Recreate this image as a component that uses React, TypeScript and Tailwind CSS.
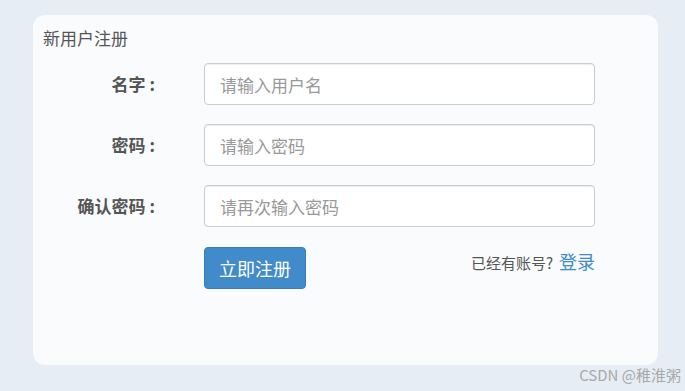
const font = { fontFamily: '"Noto Sans CJK SC", "Noto Sans", sans-serif' };

const fields = [
  { label: '名字', placeholder: '请输入用户名', type: 'text' },
  { label: '密码', placeholder: '请输入密码', type: 'password' },
  { label: '确认密码', placeholder: '请再次输入密码', type: 'password' },
];

export default function App() {
  return (
    <div
      className="w-[685px] h-[391px] bg-[#e6edf5] pt-[15px] overflow-hidden"
      style={font}
    >
      <div className="ml-[33px] w-[625px] h-[350px] rounded-[12px] bg-[#f9fbfd] pt-[12px] pl-[10px]">
        <div className="text-[17px] leading-[22px] text-[#555]">新用户注册</div>

        <form className="mt-[14px] flex flex-col gap-[19px]" onSubmit={(e) => e.preventDefault()}>
          {fields.map((f) => (
            <div key={f.label} className="flex items-center">
              <label className="w-[112px] text-right text-[17px] font-bold text-[#555]">
                {f.label}
                <span className="ml-[4px]">:</span>
              </label>
              <input
                type="text"
                placeholder={f.placeholder}
                className="ml-[49px] w-[391px] h-[42px] rounded-[4px] border border-[#ccc] bg-white px-[15px] text-[17px] text-[#555] placeholder:text-[#999] shadow-[inset_0_1px_1px_rgba(0,0,0,0.075)] outline-none"
                style={font}
              />
            </div>
          ))}

          <div className="flex justify-between w-[391px] ml-[161px] mt-[1px]">
            <button
              type="submit"
              className="w-[102px] h-[42px] rounded-[4px] bg-[#428bca] border border-[#357ebd] text-white text-[18px]"
              style={font}
            >
              立即注册
            </button>
            <div className="flex items-baseline mt-[1px] h-[26px]">
              <span className="text-[15px] text-[#555]">已经有账号?</span>
              <a className="ml-[6px] text-[18px] text-[#428bca] cursor-pointer">登录</a>
            </div>
          </div>
        </form>
      </div>
      <div className="w-[681px] text-right text-[15px] leading-[20px] mt-[0px] text-[#a9a9a9]">
        CSDN @稚淮粥
      </div>
    </div>
  );
}
